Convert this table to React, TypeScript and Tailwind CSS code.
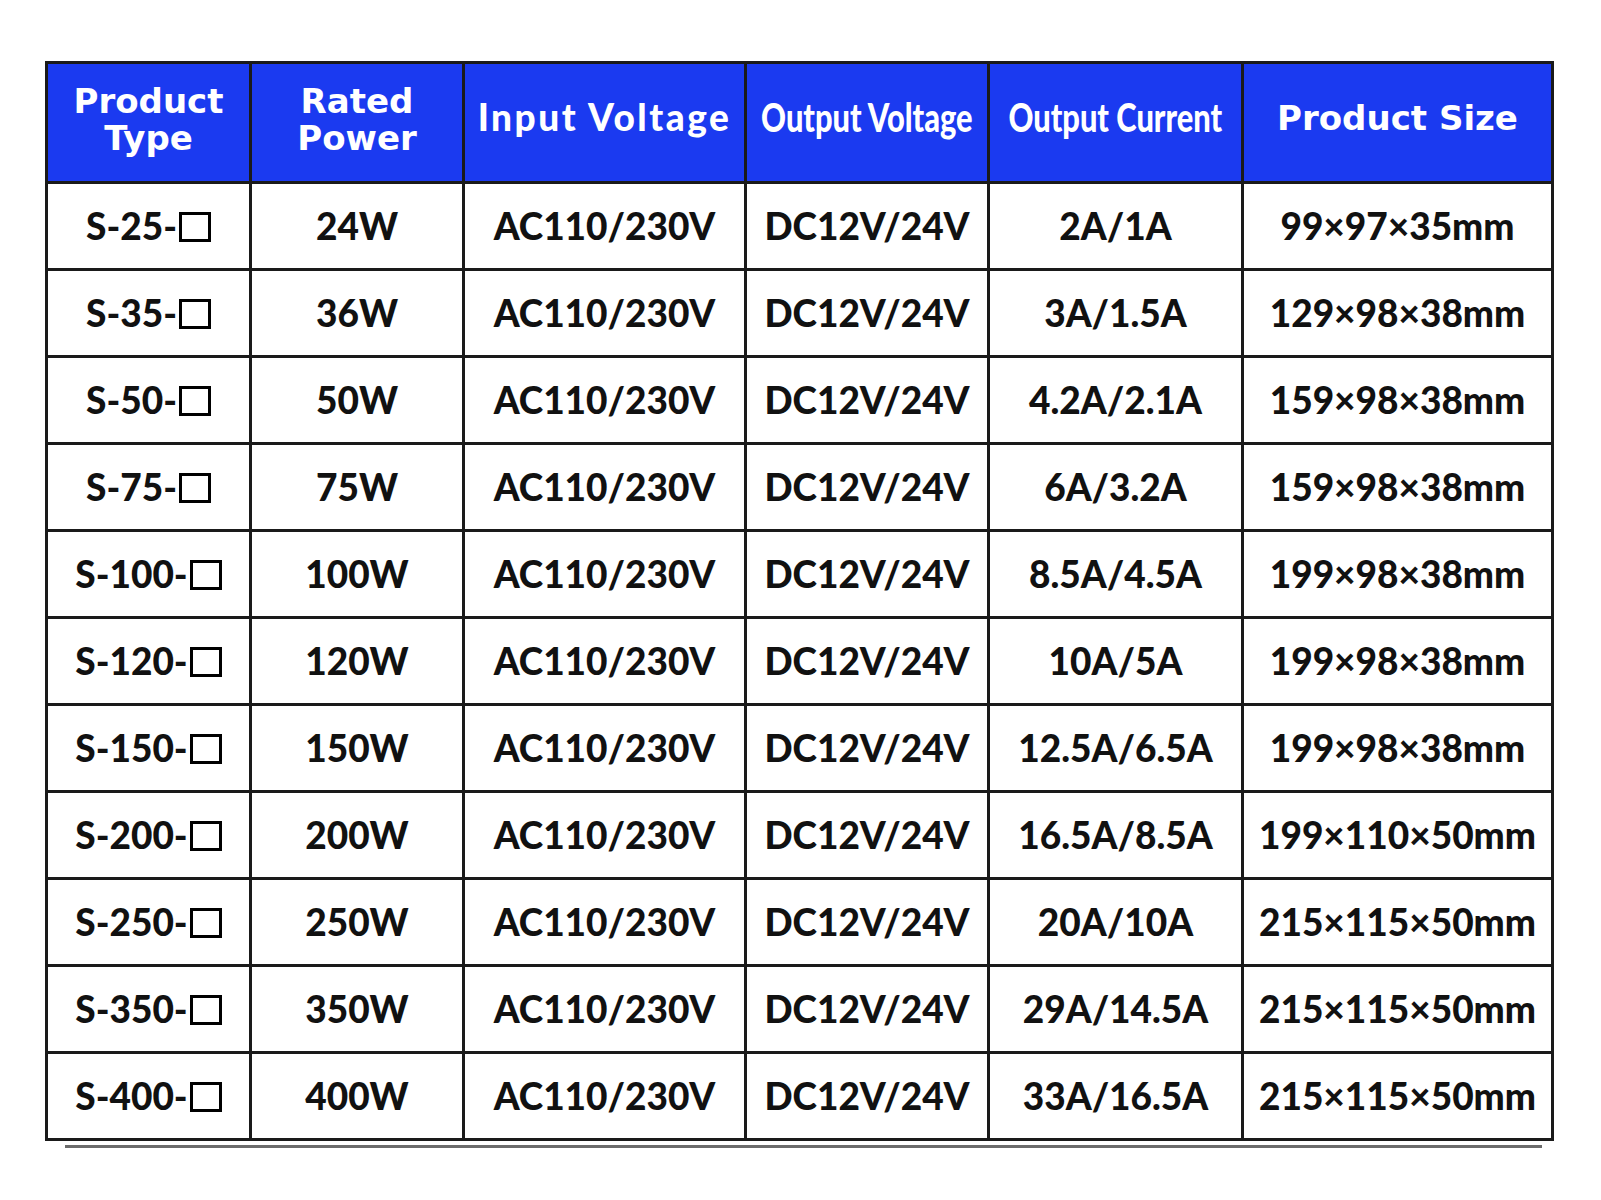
const ROWS: string[][] = [
  ["S-25-", "24W", "AC110/230V", "DC12V/24V", "2A/1A", "99×97×35mm"],
  ["S-35-", "36W", "AC110/230V", "DC12V/24V", "3A/1.5A", "129×98×38mm"],
  ["S-50-", "50W", "AC110/230V", "DC12V/24V", "4.2A/2.1A", "159×98×38mm"],
  ["S-75-", "75W", "AC110/230V", "DC12V/24V", "6A/3.2A", "159×98×38mm"],
  ["S-100-", "100W", "AC110/230V", "DC12V/24V", "8.5A/4.5A", "199×98×38mm"],
  ["S-120-", "120W", "AC110/230V", "DC12V/24V", "10A/5A", "199×98×38mm"],
  ["S-150-", "150W", "AC110/230V", "DC12V/24V", "12.5A/6.5A", "199×98×38mm"],
  ["S-200-", "200W", "AC110/230V", "DC12V/24V", "16.5A/8.5A", "199×110×50mm"],
  ["S-250-", "250W", "AC110/230V", "DC12V/24V", "20A/10A", "215×115×50mm"],
  ["S-350-", "350W", "AC110/230V", "DC12V/24V", "29A/14.5A", "215×115×50mm"],
  ["S-400-", "400W", "AC110/230V", "DC12V/24V", "33A/16.5A", "215×115×50mm"],
];

const cellBorder = "border-[3px] border-[#1a1a1a]";
const wide = "font-['DejaVu_Sans',sans-serif] font-bold text-[34px] leading-[37px]";

// condensed header text: Lato squeezed sideways, centred even when the unscaled box overflows
function Narrow({ children }: { children: string }) {
  return (
    <div className="flex justify-center">
      <span className="shrink-0 scale-x-[0.79] font-['Lato',sans-serif] text-[39px] font-black leading-[44px] whitespace-nowrap">
        {children}
      </span>
    </div>
  );
}

function Box() {
  return <span className="ml-[2px] inline-block h-[30px] w-[32px] border-[3px] border-black align-[-2px]" />;
}

export default function App() {
  return (
    <div className="min-h-[1200px] w-[1601px] bg-white pt-[61px]">
      <table className={`ml-[45px] w-[1506px] table-fixed border-collapse ${cellBorder}`}>
        <colgroup>
          <col className="w-[204px]" />
          <col className="w-[213px]" />
          <col className="w-[282px]" />
          <col className="w-[243px]" />
          <col className="w-[254px]" />
          <col className="w-[310px]" />
        </colgroup>
        <thead>
          <tr className="h-[120px] bg-[#1b3af0] text-white">
            <th className={`${cellBorder} pb-[6px] ${wide}`}>
              Product
              <br />
              Type
            </th>
            <th className={`${cellBorder} pb-[6px] ${wide}`}>
              Rated
              <br />
              Power
            </th>
            <th className={`${cellBorder} pb-[12px] font-['Lato',sans-serif] text-[37px] font-black tracking-[2.5px] whitespace-nowrap`}>
              Input Voltage
            </th>
            <th className={`${cellBorder} pb-[12px]`}>
              <Narrow>Output Voltage</Narrow>
            </th>
            <th className={`${cellBorder} pb-[12px]`}>
              <Narrow>Output Current</Narrow>
            </th>
            <th className={`${cellBorder} pb-[8px] whitespace-nowrap ${wide}`}>Product Size</th>
          </tr>
        </thead>
        <tbody className="font-['Lato',sans-serif] text-[37px] font-black text-[#111]">
          {ROWS.map((row) => (
            <tr key={row[0]} className="h-[87px]">
              {row.map((cell, i) => (
                <td key={i} className={`${cellBorder} text-center whitespace-nowrap`}>
                  {cell}
                  {i === 0 && <Box />}
                </td>
              ))}
            </tr>
          ))}
        </tbody>
      </table>
      <div className="ml-[65px] mt-[4px] h-[3px] w-[1477px] bg-[#6b6b6b]" />
    </div>
  );
}
